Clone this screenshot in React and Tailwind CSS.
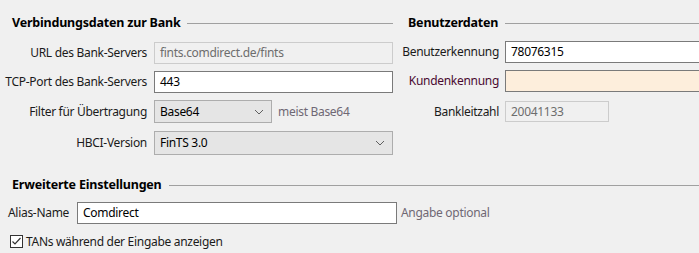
import React from 'react';

function Chevron() {
    return (
        <svg width="10" height="6" viewBox="0 0 10 6" className="shrink-0">
            <polyline points="1,1 5,5 9,1" fill="none" stroke="#606060" strokeWidth="1" />
        </svg>
    );
}

function Heading({ title, className = '' }) {
    return (
        <div className={`flex h-[16px] items-center ${className}`}>
            <span className="whitespace-nowrap text-[12.5px] font-bold tracking-[-0.2px] text-black">{title}</span>
            <div className="ml-[7px] h-px flex-1 bg-[#a0a0a0]" />
        </div>
    );
}

function Row({ label, labelWidth, labelColor = 'text-[#1b1b1b]', gap, className = '', children }) {
    return (
        <div className={`flex items-center ${className}`}>
            <div
                className={`shrink-0 whitespace-nowrap text-right ${labelColor}`}
                style={{ width: labelWidth }}
            >
                {label}
            </div>
            <div className="flex items-center" style={{ marginLeft: gap }}>
                {children}
            </div>
        </div>
    );
}

export default function App() {
    return (
        <div className="h-[253px] w-[699px] overflow-hidden whitespace-nowrap bg-[#f0f0f0] font-['Noto_Sans',sans-serif] text-[12px] leading-none tracking-[-0.3px]">
            <div className="flex pt-[15px]">
                <section className="w-[393px] shrink-0">
                    <Heading title="Verbindungsdaten zur Bank" className="pl-3" />

                    <Row label="URL des Bank-Servers" labelWidth={147} gap={7} className="mt-[11px]">
                        <div className="flex h-[22px] w-[239px] items-center border border-[#cccccc] bg-[#f0f0f0] px-[5px] text-[#6d6d6d]">
                            fints.comdirect.de/fints
                        </div>
                    </Row>

                    <Row label="TCP-Port des Bank-Servers" labelWidth={147} gap={7} className="mt-[7px]">
                        <div className="flex h-[22px] w-[239px] items-center border border-[#7a7a7a] bg-white px-[5px] text-black">
                            443
                        </div>
                    </Row>

                    <Row label="Filter für Übertragung" labelWidth={147} gap={7} className="mt-[7px]">
                        <div className="flex h-[23px] w-[118px] items-center justify-between border border-[#adadad] bg-[#e5e5e5] pl-[5px] pr-[7px] text-black">
                            <span>Base64</span>
                            <Chevron />
                        </div>
                        <span className="ml-[6px] text-[#6f6874]">meist Base64</span>
                    </Row>

                    <Row label="HBCI-Version" labelWidth={147} gap={7} className="mt-[8px]">
                        <div className="flex h-[24px] w-[239px] items-center justify-between border border-[#adadad] bg-[#e5e5e5] pl-[5px] pr-[7px] text-black">
                            <span>FinTS 3.0</span>
                            <Chevron />
                        </div>
                    </Row>
                </section>

                <section className="flex-1">
                    <Heading title="Benutzerdaten" className="pl-[15px]" />

                    <Row label="Benutzerkennung" labelWidth={106} gap={6} className="mt-[10px]">
                        <div className="flex h-[22px] w-[200px] items-center border border-[#7a7a7a] bg-white px-[5px] text-black">
                            78076315
                        </div>
                    </Row>

                    <Row
                        label="Kundenkennung"
                        labelWidth={106}
                        labelColor="text-[#4a0a30]"
                        gap={6}
                        className="mt-[7px]"
                    >
                        <div className="h-[22px] w-[200px] border border-[#7a7a7a] bg-[#fdeedc]" />
                    </Row>

                    <Row label="Bankleitzahl" labelWidth={106} gap={6} className="mt-[9px]">
                        <div className="flex h-[21px] w-[104px] items-center border border-[#cccccc] bg-[#f0f0f0] px-[5px] text-[#6d6d6d]">
                            20041133
                        </div>
                    </Row>
                </section>
            </div>

            <Heading title="Erweiterte Einstellungen" className="mt-[22px] pl-3" />

            <div className="mt-[9px] flex items-center pl-[8px]">
                <span className="w-[64px] text-[#1b1b1b]">Alias-Name</span>
                <div className="ml-[5px] flex h-[22px] w-[320px] items-center border border-[#7a7a7a] bg-white px-[5px] text-black">
                    Comdirect
                </div>
                <span className="ml-[4px] text-[#6f6874]">Angabe optional</span>
            </div>

            <label className="mt-[11px] flex items-center pl-[10px] text-[#1b1b1b]">
                <span className="flex h-[13px] w-[13px] items-center justify-center border border-[#333333] bg-white">
                    <svg width="11" height="11" viewBox="0 0 11 11">
                        <polyline points="1.5,5.5 4,8 9.5,2" fill="none" stroke="#333333" strokeWidth="1.2" />
                    </svg>
                </span>
                <span className="ml-[3px]">TANs während der Eingabe anzeigen</span>
            </label>
        </div>
    );
}
